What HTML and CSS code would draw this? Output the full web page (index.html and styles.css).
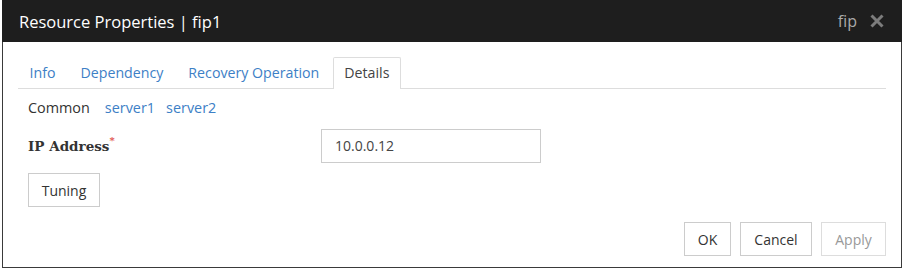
FILE: index.html
```html
<!DOCTYPE html>
<html>
<head>
<meta charset="utf-8">
<link rel="stylesheet" href="styles.css">
</head>
<body>
<div class="dialog">
  <div class="titlebar">
    <div class="title">Resource Properties | fip1</div>
    <div class="title-right">
      <span class="res-type">fip</span>
      <svg class="close" width="14" height="14" viewBox="0 0 14 14"><path d="M1.5 1.5 L12.5 12.5 M12.5 1.5 L1.5 12.5" stroke="#7c7c7c" stroke-width="3" stroke-linecap="butt"/></svg>
    </div>
  </div>
  <div class="content">
    <ul class="tabs">
      <li class="tab">Info</li>
      <li class="tab">Dependency</li>
      <li class="tab">Recovery Operation</li>
      <li class="tab active">Details</li>
    </ul>
    <div class="subnav">
      <span class="sub current">Common</span>
      <span class="sub link">server1</span>
      <span class="sub link">server2</span>
    </div>
    <div class="field">
      <label class="label">IP Address<sup class="req">*</sup></label>
      <div class="input">10.0.0.12</div>
    </div>
    <div class="tuning-row">
      <button class="btn">Tuning</button>
    </div>
    <div class="footer">
      <button class="btn ok">OK</button>
      <button class="btn cancel">Cancel</button>
      <button class="btn apply">Apply</button>
    </div>
  </div>
</div>
</body>
</html>
```
FILE: styles.css
```css
* { box-sizing: border-box; }
html, body { margin: 0; padding: 0; background: #fff; }
body { font-family: "Open Sans", "Noto Sans", sans-serif; color: #333; }

.dialog {
  margin-left: 2px;
  width: 900px;
  height: 268px;
  border: 1px solid #3a3a3a;
  border-top: none;
  display: flex;
  flex-direction: column;
}

.titlebar {
  height: 42px;
  background: #1e1e1e;
  margin: 0 -1px;
  display: flex;
  align-items: center;
  justify-content: space-between;
  padding: 0 18px 0 17px;
}
.title { color: #fff; font-size: 16.5px; }
.title-right { display: flex; align-items: center; }
.res-type { color: #aaa; font-size: 16px; margin-right: 13px; }
.close { display: block; }

.content { padding: 0 15px; flex: 1; display: flex; flex-direction: column; }

.tabs {
  list-style: none;
  margin: 15px 0 0;
  padding: 0;
  display: flex;
  border-bottom: 1px solid #ddd;
  height: 32px;
}
.tab {
  padding: 0 10.5px;
  margin-right: 2px;
  color: #3d80c6;
  font-size: 14.2px;
  line-height: 30px;
  border: 1px solid transparent;
  border-bottom: none;
}
.tab.active {
  color: #444;
  background: #fff;
  border-color: #ddd;
  height: 32px;
  margin-bottom: -1px;
  border-radius: 2px 2px 0 0;
}

.subnav { display: flex; margin: 9px 0 0 10px; font-size: 14.4px; line-height: 20px; }
.sub.current { color: #333; margin-right: 15px; }
.sub.link { color: #3d80c6; margin-right: 11px; }

.field { display: flex; align-items: center; margin-top: 11px; padding-left: 10px; }
.label {
  width: 293px;
  font-family: "DejaVu Serif", serif;
  font-weight: bold;
  font-size: 13.5px;
  color: #333;
}
.req { color: #e0504a; font-size: 10px; vertical-align: top; position: relative; top: -3px; }
.input {
  width: 220px;
  height: 34px;
  border: 1px solid #ccc;
  padding: 0 13px;
  font-size: 14px;
  line-height: 32px;
  color: #444;
}

.tuning-row { margin-top: 10px; padding-left: 10px; }
.btn {
  font-family: "Open Sans", "Noto Sans", sans-serif;
  font-size: 14px;
  color: #333;
  background: #fff;
  border: 1px solid #ccc;
  height: 34px;
  padding: 0 12px;
  border-radius: 0;
}
.tuning-row .btn { width: 72px; }

.footer { display: flex; justify-content: flex-end; margin-top: 15px; }
.footer .btn { height: 34px; margin-left: 9px; }
.ok { width: 47px; }
.cancel { width: 72px; }
.apply { width: 65px; color: #999; border-color: #ddd; }
```
